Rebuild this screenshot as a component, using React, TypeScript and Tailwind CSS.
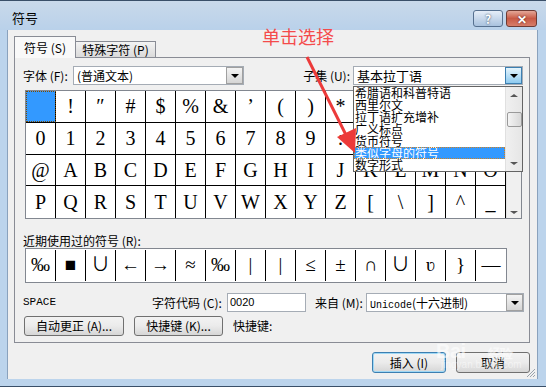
import React from "react";

const ROWS = [
  [" ", "!", "″", "#", "$", "%", "&", "’", "(", ")", "*", "+", ",", "-", ".", "/"],
  ["0", "1", "2", "3", "4", "5", "6", "7", "8", "9", ":", ";", "<", "=", ">", "?"],
  ["@", "A", "B", "C", "D", "E", "F", "G", "H", "I", "J", "K", "L", "M", "N", "O"],
  ["P", "Q", "R", "S", "T", "U", "V", "W", "X", "Y", "Z", "[", "\\", "]", "^", "_"],
];

const RECENT = ["‰", "■", "∪", "←", "→", "≈", "‰", "|", "|", "≤", "±", "∩", "∪", "ʋ", "}", "—"];

const SUBSETS = ["希腊语和科普特语", "西里尔文", "拉丁语扩充增补", "广义标点", "货币符号", "类似字母的符号", "数字形式"];

const UI = { fontFamily: '"Noto Sans CJK SC", "Liberation Sans", sans-serif' };
const SERIF = { fontFamily: '"Liberation Serif", "Noto Sans CJK SC", serif' };
const MONO = { fontFamily: '"Liberation Mono", "Noto Sans CJK SC", monospace' };

function DropBtn({ hot }: { hot?: boolean }) {
  return (
    <div
      className={
        hot
          ? "w-[17px] h-full flex items-center justify-center border border-[#3c7fb1] bg-gradient-to-b from-[#e5f4fc] to-[#8ecbf0]"
          : "w-[17px] h-full flex items-center justify-center border border-[#a0a0a0] bg-gradient-to-b from-[#f4f4f4] to-[#d5d5d5]"
      }
    >
      <div className="w-0 h-0 border-l-[4px] border-r-[4px] border-t-[4px] border-l-transparent border-r-transparent border-t-black" />
    </div>
  );
}

function Button({ children, w, focus }: { children: React.ReactNode; w: string; focus?: boolean }) {
  return (
    <div
      className={`${w} h-full flex items-center justify-center rounded-[3px] text-[12px] text-black bg-gradient-to-b from-[#f3f3f3] via-[#ebebeb] to-[#d6d6d6] ${
        focus ? "border border-[#3c7fb1] shadow-[inset_0_0_0_1px_#9fd8f5]" : "border border-[#707070]"
      }`}
    >
      {children}
    </div>
  );
}

export default function App() {
  return (
    <div className="w-[546px] h-[387px] relative overflow-hidden bg-[#bcd4ec] border-t border-b border-[#3a4f68]" style={UI}>
      {/* title bar */}
      <div className="h-[29px] flex items-center pl-[12px] pr-[9px] bg-gradient-to-b from-[#c9d9ea] to-[#b9d1ea]">
        <span className="text-[13px] text-black mt-[5px]">符号</span>
        <div className="ml-auto flex gap-[3px] mt-[6px]">
          <div className="w-[30px] h-[17px] rounded-[3px] border border-[#56708f] bg-gradient-to-b from-[#e6eef8] to-[#a9c2de] flex items-center justify-center text-[12px] font-bold text-white [text-shadow:0_0_2px_#1f3550]">
            ?
          </div>
          <div className="w-[31px] h-[17px] rounded-[3px] border border-[#6e3b33] bg-gradient-to-b from-[#e3a798] via-[#c85a45] to-[#d77e6a] flex items-center justify-center text-[12px] font-bold text-white [text-shadow:0_0_2px_#4a1a12]">
            ✕
          </div>
        </div>
      </div>

      {/* client area */}
      <div className="ml-[7px] w-[531px] h-[349px] bg-[#f0f0f0] border-l border-r border-[#8aa2bd] relative">
        {/* tabs */}
        <div className="flex items-end pl-[6px] pt-[6px] h-[28px] relative z-10">
          <div className="w-[62px] h-[22px] bg-[#f9f9f9] border border-b-0 border-[#898c95] flex items-center justify-center text-[12px] text-black">
            符号 (S)
          </div>
          <div className="w-[80px] h-[16px] mb-[1px] bg-gradient-to-b from-[#f3f3f3] to-[#dadada] border border-l-0 border-b-0 border-[#898c95] flex items-center justify-center text-[12px] text-black">
            特殊字符 (P)
          </div>
        </div>

        {/* panel */}
        <div className="ml-[6px] -mt-[1px] w-[516px] h-[286px] border border-[#898c95] bg-[#f0f0f0] text-[12px] text-black">
          {/* font / subset row */}
          <div className="flex items-center mt-[8px] h-[19px] pl-[8px] pr-[6px]">
            <span className="w-[50px]">字体 (F):</span>
            <div className="w-[171px] h-[19px] flex border border-[#a5acb5] bg-white">
              <span className="flex-1 pl-[3px] leading-[17px]">(普通文本)</span>
              <DropBtn />
            </div>
            <span className="ml-auto mr-[3px]">子集 (U):</span>
            <div className="w-[170px] h-[19px] flex border border-[#a5acb5] bg-white">
              <span className="flex-1 pl-[3px] leading-[17px] text-[13px]">基本拉丁语</span>
              <DropBtn hot />
            </div>
          </div>

          {/* character grid */}
          <div className="ml-[10px] mt-[5px] w-[497px] h-[129px] flex border border-[#828790] bg-white">
            <div className="w-[480px] flex flex-col">
              {ROWS.map((row, r) => (
                <div key={r} className="flex h-[32px] border-b border-black last:border-b-0">
                  {row.map((c, i) => (
                    <div
                      key={i}
                      className={`w-[30px] flex items-center justify-center text-[20px] border-r border-black ${
                        r === 0 && i === 0 ? "bg-[#3399ff] outline-1 outline-dotted outline-[#7a4a00] -outline-offset-1" : ""
                      }`}
                      style={SERIF}
                    >
                      {c}
                    </div>
                  ))}
                </div>
              ))}
            </div>
            <div className="flex-1 flex flex-col justify-end items-center bg-[#f0f0f0] border-l border-[#e3e3e3] pb-[4px]">
              <div className="w-0 h-0 border-l-[4px] border-r-[4px] border-t-[3px] border-l-transparent border-r-transparent border-t-[#555]" />
            </div>
          </div>

          {/* recent */}
          <div className="ml-[8px] mt-[15px] h-[13px] leading-[13px]">近期使用过的符号 (R):</div>
          <div className="ml-[10px] mt-[1px] w-[482px] h-[35px] flex items-center border border-[#828790] bg-white">
            {RECENT.map((c, i) => (
              <div
                key={i}
                className={`w-[30px] h-[31px] flex items-center justify-center text-[19px] ${i < 15 ? "border-r border-black" : ""}`}
                style={SERIF}
              >
                {c}
              </div>
            ))}
          </div>

          {/* code row */}
          <div className="flex items-center mt-[10px] h-[19px] pl-[8px]">
            <span className="w-[129px] text-[11px]" style={MONO}>SPACE</span>
            <span className="w-[75px]">字符代码 (C):</span>
            <div className="w-[79px] h-[19px] border border-[#a5acb5] bg-white pl-[2px] leading-[17px] text-[11px]" style={{ fontFamily: '"Liberation Sans", sans-serif' }}>
              0020
            </div>
            <span className="ml-[9px] w-[51px]">来自 (M):</span>
            <div className="w-[158px] h-[19px] flex border border-[#a5acb5] bg-white">
              <span className="flex-1 pl-[3px] leading-[17px]">
                <span className="text-[10px]" style={MONO}>Unicode</span>(十六进制)
              </span>
              <DropBtn />
            </div>
          </div>

          {/* shortcut row */}
          <div className="flex items-center mt-[4px] h-[20px] pl-[9px]">
            <Button w="w-[100px]">自动更正 (A)...</Button>
            <div className="w-[10px]" />
            <Button w="w-[89px]">快捷键 (K)...</Button>
            <span className="ml-[10px]">快捷键:</span>
          </div>
        </div>

        {/* dialog buttons */}
        <div className="flex justify-end gap-[10px] pr-[7px] mt-[9px] h-[21px]">
          <Button w="w-[74px]" focus>插入 (I)</Button>
          <Button w="w-[74px]">取消</Button>
        </div>

        {/* watermark */}
        <div className="absolute left-[428px] top-[306px] text-[20px] font-bold text-white/60 tracking-tight pointer-events-none" style={{ fontFamily: '"Liberation Sans", sans-serif' }}>
          Bai<span className="text-[13px] ml-[22px]">经验</span>
        </div>
        <div className="absolute left-[433px] top-[329px] text-[10px] leading-[12px] text-white/50 pointer-events-none" style={{ fontFamily: '"Liberation Sans", sans-serif' }}>
          jingyan.baidu.com
        </div>

        {/* resize grip */}
        <svg className="absolute right-[1px] bottom-[1px]" width="11" height="11" viewBox="0 0 11 11">
          <path d="M10 2 L2 10 M10 5 L5 10 M10 8 L8 10" stroke="#9aa3ad" strokeWidth="1" />
        </svg>
      </div>

      {/* open subset list */}
      <div className="absolute left-[353px] top-[85px] w-[170px] h-[86px] flex border border-[#646464] bg-white text-[12px] text-black" style={UI}>
        <div className="flex-1 overflow-hidden">
          {SUBSETS.map((s, i) => (
            <div
              key={s}
              className={`h-[12px] leading-[12px] pl-[1px] whitespace-nowrap overflow-hidden ${
                i === 5 ? "bg-[#3399ff] text-white outline-1 outline-dotted outline-[#d08020] -outline-offset-1" : ""
              }`}
            >
              {s}
            </div>
          ))}
        </div>
        <div className="w-[17px] flex flex-col items-center bg-gradient-to-r from-[#f0f0f0] to-[#e6e6e6] border-l border-[#e0e0e0]">
          <div className="mt-[7px] w-0 h-0 border-l-[4px] border-r-[4px] border-b-[3px] border-l-transparent border-r-transparent border-b-[#555]" />
          <div className="mt-[15px] w-[15px] h-[15px] rounded-[2px] border border-[#9a9a9a] bg-gradient-to-r from-[#f4f4f4] to-[#d8d8d8]" />
          <div className="mt-auto mb-[6px] w-0 h-0 border-l-[4px] border-r-[4px] border-t-[3px] border-l-transparent border-r-transparent border-t-[#555]" />
        </div>
      </div>

      {/* annotation */}
      <div className="absolute left-[262px] top-[22px] text-[18px] text-[#f44b4b]" style={UI}>
        单击选择
      </div>
      <svg className="absolute left-0 top-0 pointer-events-none" width="546" height="387" viewBox="0 0 546 387">
        <line x1="307" y1="56" x2="346" y2="134" stroke="#ec3a3a" strokeWidth="3" />
        <polygon points="355,152 337,136 356,127" fill="#ec3a3a" />
      </svg>
    </div>
  );
}
